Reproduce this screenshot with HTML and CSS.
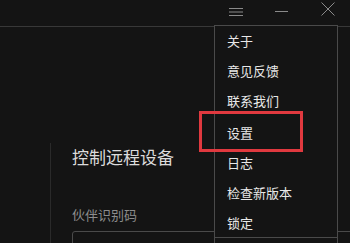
FILE: index.html
```html
<!DOCTYPE html>
<html lang="zh">

<head>
    <meta charset="UTF-8"/>
    <title>远程控制</title>
    <link rel="stylesheet" href="styles.css">
</head>

<body>
<div class="window">
    <div class="titlebar">
        <svg class="tb-btn" width="46" height="26" viewBox="0 0 46 26">
            <path d="M16 8.5H30M16 12H30M16 15.5H30" stroke="#8a8a8a" stroke-width="1" fill="none"/>
        </svg>
        <svg class="tb-btn" width="46" height="26" viewBox="0 0 46 26">
            <path d="M16 11.5H29" stroke="#8a8a8a" stroke-width="1" fill="none"/>
        </svg>
        <svg class="tb-btn" width="46" height="26" viewBox="0 0 46 26">
            <path d="M16.5 2.5L29.5 15.5M29.5 2.5L16.5 15.5" stroke="#8a8a8a" stroke-width="1" fill="none"/>
        </svg>
    </div>

    <div class="main">
        <div class="panel">
            <h2 class="panel-title">控制远程设备</h2>
            <div class="label">伙伴识别码</div>
            <div class="input"></div>
        </div>
    </div>

    <!-- 下拉菜单 -->
    <ul class="menu">
        <li>关于</li>
        <li>意见反馈</li>
        <li>联系我们</li>
        <li class="group">设置</li>
        <li>日志</li>
        <li>检查新版本</li>
        <li>锁定</li>
        <li class="sep"></li>
        <li>退出</li>
    </ul>

    <div class="mark"></div>
</div>
</body>

</html>
```

FILE: styles.css
```css
* {
    margin: 0;
    padding: 0;
    box-sizing: border-box;
}

body {
    background: #141414;
    font-family: "Noto Sans CJK SC", "Noto Sans", sans-serif;
    overflow: hidden;
}

.window {
    position: relative;
    width: 350px;
    height: 243px;
    overflow: hidden;
}

.titlebar {
    height: 27px;
    display: flex;
    justify-content: flex-end;
    border-bottom: 1px solid #383838;
    padding-right: 0;
    margin-right: -1px;
}

.tb-btn {
    display: block;
}

.main {
    padding-left: 50px;
}

.panel {
    margin-top: 116px;
    padding: 2px 0 0 21px;
    border-left: 1px solid #2a2a2a;
    height: 120px;
}

.panel-title {
    font-size: 17px;
    font-weight: 400;
    line-height: 24px;
    color: #dcdcdc;
}

.label {
    margin-top: 37px;
    font-size: 13px;
    line-height: 18px;
    color: #8c8c8c;
}

.input {
    margin-top: 7px;
    width: 300px;
    height: 32px;
    border: 1px solid #4a4a4a;
    border-radius: 3px;
}

.menu {
    position: absolute;
    left: 214px;
    top: 25px;
    width: 124px;
    height: 240px;
    list-style: none;
    background: #141414;
    border: 1px solid #4a4a4a;
}

.menu li {
    height: 30px;
    line-height: 30px;
    padding-left: 12px;
    font-size: 13px;
    color: #e8e8e8;
}

.menu .group {
    margin-top: 2px;
}

.menu .sep {
    height: 1px;
    background: #4a4a4a;
    margin-top: -1px;
}

.mark {
    position: absolute;
    left: 199px;
    top: 111px;
    width: 104px;
    height: 41px;
    border: 3px solid #e0393f;
}
```
